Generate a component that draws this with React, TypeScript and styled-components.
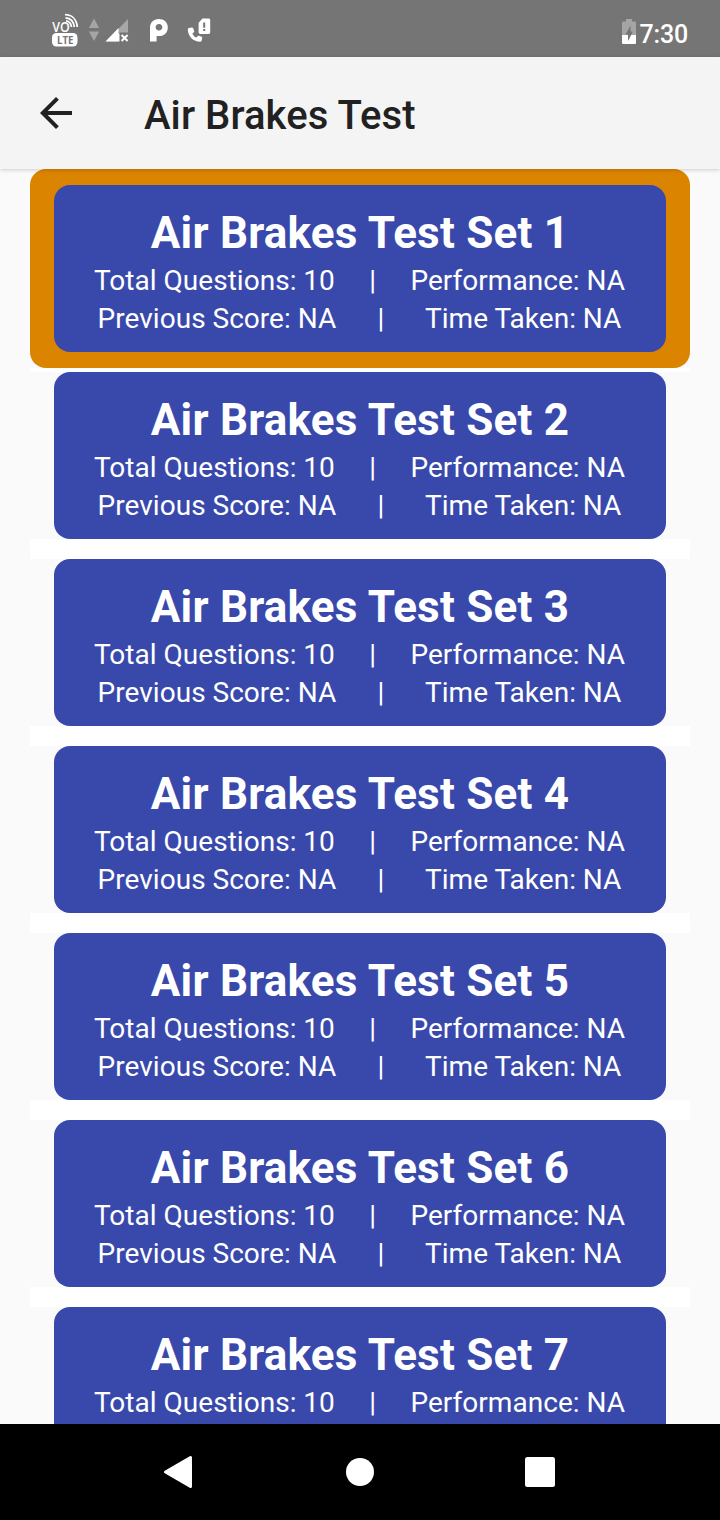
import React from 'react';
import styled, { createGlobalStyle } from 'styled-components';

const GlobalStyle = createGlobalStyle`
  * { box-sizing: border-box; }
  body { margin: 0; background: #fafafa; font-family: Roboto, sans-serif; }
`;

const Screen = styled.div`
  display: flex;
  flex-direction: column;
  width: 720px;
  height: 1520px;
  overflow: hidden;
  background: #fafafa;
`;

const StatusBar = styled.header`
  display: flex;
  justify-content: space-between;
  flex: none;
  height: 57px;
  padding: 0 32px 0 48px;
  background: #757575;
  color: #fff;
`;

const StatusGroup = styled.div`
  display: flex;
  gap: 1px;
`;

const Clock = styled.span`
  padding-top: 20px;
  font-size: 25px;
  line-height: 30px;
  font-weight: 500;
  letter-spacing: -0.2px;
`;

const AppBar = styled.div`
  position: relative;
  z-index: 1;
  display: flex;
  align-items: center;
  flex: none;
  height: 112px;
  padding-left: 32px;
  background: #f4f4f4;
  box-shadow: 0 1px 4px rgba(0, 0, 0, 0.18);
`;

const BackButton = styled.button`
  display: flex;
  width: 48px;
  height: 48px;
  margin-right: 64px;
  padding: 0;
  border: 0;
  background: none;
  color: #212121;
`;

const PageTitle = styled.h1`
  margin: 6px 0 0;
  color: #212121;
  font-size: 40px;
  line-height: 48px;
  font-weight: 500;
  letter-spacing: 0.08px;
`;

const List = styled.main`
  flex: 1;
  min-height: 0;
  overflow: hidden;
  padding: 0 30px;
`;

const ListItem = styled.section<{ $selected: boolean }>`
  height: ${(p) => (p.$selected ? 199 : 167)}px;
  padding: ${(p) => (p.$selected ? '16px 24px' : '0 24px')};
  border-radius: ${(p) => (p.$selected ? 16 : 0)}px;
  background: ${(p) => (p.$selected ? '#db8400' : 'transparent')};
`;

const Divider = styled.div<{ $height: number }>`
  height: ${(p) => p.$height}px;
  background: #fff;
`;

const Card = styled.article`
  height: 167px;
  padding-top: 22px;
  border-radius: 16px;
  background: #3949ab;
  color: #fff;
  text-align: center;
`;

const CardTitle = styled.h2`
  margin: 0;
  font-size: 44px;
  line-height: 52px;
  font-weight: 700;
  letter-spacing: 0.21px;
`;

const CardLine = styled.p`
  margin: 0;
  font-size: 28px;
  line-height: 38px;
  letter-spacing: 0.03px;
  word-spacing: -0.1px;
  white-space: pre;
`;

const CardBody = styled.div`
  padding: 3px 1px 0 0;
`;

const NavBar = styled.nav`
  display: flex;
  justify-content: center;
  gap: 132px;
  flex: none;
  height: 96px;
  padding-top: 24px;
  background: #000;
`;

const NavIcon = styled.svg`
  width: 48px;
  height: 48px;
  fill: #fff;
  stroke: #fff;
  stroke-linejoin: round;
`;

const SETS = [1, 2, 3, 4, 5, 6, 7];
const SELECTED = 1;
const gap = (n: number) => ' '.repeat(n);

function StatusIcons() {
  return (
    <svg width="170" height="57" viewBox="48 0 170 57" fill="#fff">
      <text x="52.3" y="31.5" fontFamily="Open Sans, sans-serif" fontSize="14.5" fontWeight="600" textLength="17.5" lengthAdjust="spacingAndGlyphs">VO</text>
      <g fill="none" stroke="#fff" strokeWidth="1.8">
        <path d="M66 20.8c3.2.4 5 2.600 5.500 6.200" />
        <path d="M65.500 17.800c4.800.3 8.200 3.600 8.800 9.200" />
        <path d="M65 14.700c7 0 11.600 4.800 12.300 12.300" />
      </g>
      <rect x="52" y="33" width="25.500" height="13.500" rx="4.500" />
      <text x="57" y="43.900" fill="#757575" fontFamily="Open Sans, sans-serif" fontSize="11" fontWeight="700" textLength="16.500" lengthAdjust="spacingAndGlyphs">LTE</text>
      <path fill="#a5a5a5" d="M94 18.500l5.200 9.500H88.800zM94 41l5.200-9.500H88.800z" />
      <path fill="#a8a8a8" d="M128 19v14h-10v8.500h-12z" />
      <path d="M118.500 28v13.500H105.500zM118.500 28v5.500h1.500v8H105.500z" />
      <path d="M119.500 32.500H130v11H119.500z" fill="#757575" />
      <path d="M121.600 35l6 6M127.600 35l-6 6" stroke="#fff" strokeWidth="2" />
      <path fillRule="evenodd" d="M150 41.500V28c0-5.500 3.500-9 8.800-9s9 3.400 9 8.400c0 5-3.700 8.600-8.700 8.600h-2.500v5.500zM159 24c-2.100 0-3.400 1.300-3.400 3.300s1.300 3.200 3.400 3.200 3.300-1.200 3.300-3.200-1.200-3.300-3.300-3.300z" />
      <path d="M189 28l2.800-.6c.7-.1 1.200.2 1.400.8l1 2.800c.2.600 0 1-.5 1.400l-1.400 1c1 2 2.200 3.200 4 4.200l1.300-1.400c.4-.5.900-.6 1.400-.4l2.500 1c.6.300.9.700.7 1.300l-.6 2.700c-.2.700-.6 1-1.300 1-7 0-12.500-5.500-12.500-12.500 0-.7.400-1.200 1.200-1.300z" />
      <path d="M202.500 18.500h6c1 0 1.700.7 1.700 1.700v12c0 1-.7 1.700-1.700 1.700h-8.200c-1 0-1.700-.7-1.700-1.700v-9.500z" />
      <path d="M203.200 22.500h2v5.200h-2zM203.200 29h2v2h-2z" fill="#757575" />
    </svg>
  );
}

function BatteryIcon() {
  return (
    <svg width="18" height="57" viewBox="621 0 18 57">
      <path fill="#a5a5a5" d="M626 19h6v2.500h2.500c1 0 1.500.5 1.500 1.500v12h-14V23c0-1 .5-1.500 1.500-1.500h2.500z" />
      <path fill="#fff" d="M622 35h14v7.500c0 1-.5 1.500-1.500 1.500h-11c-1 0-1.500-.5-1.500-1.500z" />
      <path fill="#757575" d="M630.500 25.500v6h2.500l-5 9.500v-6.500h-2.500z" />
    </svg>
  );
}

export default function App() {
  return (
    <Screen>
      <GlobalStyle />
      <StatusBar>
        <StatusGroup>
          <StatusIcons />
        </StatusGroup>
        <StatusGroup>
          <BatteryIcon />
          <Clock>7:30</Clock>
        </StatusGroup>
      </StatusBar>
      <AppBar>
        <BackButton aria-label="Back">
          <svg width="48" height="48" viewBox="0 0 24 24" fill="currentColor">
            <path d="M20 11H7.830l5.590-5.590L12 4l-8 8 8 8 1.410-1.410L7.830 13H20z" />
          </svg>
        </BackButton>
        <PageTitle>Air Brakes Test</PageTitle>
      </AppBar>
      <List>
        {SETS.map((n) => (
          <React.Fragment key={n}>
            <ListItem $selected={n === SELECTED}>
              <Card>
                <CardTitle>Air Brakes Test Set {n}</CardTitle>
                <CardBody>
                  <CardLine>{`Total Questions: 10${gap(5)}|${gap(5)}Performance: NA`}</CardLine>
                  <CardLine>{`Previous Score: NA${gap(6)}|${gap(6)}Time Taken: NA`}</CardLine>
                </CardBody>
              </Card>
            </ListItem>
            <Divider $height={n === SELECTED ? 4 : 20} />
          </React.Fragment>
        ))}
      </List>
      <NavBar>
        <NavIcon viewBox="0 0 48 48">
          <path d="M34.500 9.500v29L9.500 24z" strokeWidth="3" />
        </NavIcon>
        <NavIcon viewBox="0 0 48 48">
          <circle cx="24" cy="24" r="14" stroke="none" />
        </NavIcon>
        <NavIcon viewBox="0 0 48 48">
          <rect x="9" y="9" width="30" height="30" rx="2.500" stroke="none" />
        </NavIcon>
      </NavBar>
    </Screen>
  );
}
